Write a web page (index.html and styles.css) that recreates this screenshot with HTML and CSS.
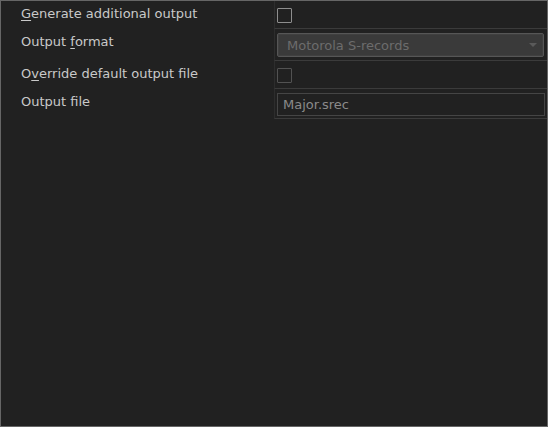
FILE: index.html
```html
<!DOCTYPE html>
<html>
<head>
<meta charset="utf-8">
<link rel="stylesheet" href="styles.css">
</head>
<body>
<div class="frame">
  <div class="row r1">
    <div class="label"><u>G</u>enerate additional output</div>
    <div class="value"><span class="check"></span></div>
  </div>
  <div class="row r2">
    <div class="label">Output <u>f</u>ormat</div>
    <div class="value">
      <div class="select"><span class="select-text">Motorola S-records</span><span class="arrow"></span></div>
    </div>
  </div>
  <div class="row r3">
    <div class="label">O<u>v</u>erride default output file</div>
    <div class="value"><span class="check disabled"></span></div>
  </div>
  <div class="row r4">
    <div class="label">Output file</div>
    <div class="value"><div class="input">Major.srec</div></div>
  </div>
</div>
</body>
</html>
```
FILE: styles.css
```css
html, body {
  margin: 0;
  padding: 0;
  background: #212121;
}
.frame {
  width: 548px;
  height: 427px;
  box-sizing: border-box;
  border: 1px solid #666666;
  background: #212121;
  font-family: "DejaVu Sans", Verdana, sans-serif;
  font-size: 13px;
  line-height: 15px;
}
.row {
  display: flex;
}
.r1 { height: 28px; }
.r2 { height: 32px; }
.r3 { height: 28px; }
.r4 { height: 30px; }
.label {
  width: 273px;
  box-sizing: border-box;
  padding: 5px 0 0 20px;
  color: #c9c9c9;
  white-space: nowrap;
}
.label u {
  text-underline-offset: 2px;
}
.value {
  flex: 1;
  border-left: 1px solid #2d2d2d;
  border-bottom: 1px solid #3b3b3b;
  display: flex;
  flex-direction: column;
  align-items: flex-start;
}
.check {
  display: block;
  width: 15px;
  height: 15px;
  box-sizing: border-box;
  margin: 7px 0 0 2px;
  border: 1px solid #8e8e8e;
  border-radius: 1px;
}
.check.disabled {
  border-color: #525252;
}
.select {
  position: relative;
  box-sizing: border-box;
  width: 267px;
  height: 24px;
  margin: 4px 0 0 2px;
  border: 1px solid #565656;
  border-radius: 2px;
  background: #3a3a3a;
  box-shadow: inset 0 0 0 1px #404040;
  color: #6c6c6c;
  padding: 4px 0 0 9px;
  white-space: nowrap;
}
.arrow {
  position: absolute;
  right: 6px;
  top: 9px;
  width: 0;
  height: 0;
  border-left: 4px solid transparent;
  border-right: 4px solid transparent;
  border-top: 4px solid #5a5a5a;
}
.input {
  box-sizing: border-box;
  width: 268px;
  height: 23px;
  margin: 4px 0 0 2px;
  border: 1px solid #454545;
  color: #8a8a8a;
  padding: 3px 0 0 5px;
  white-space: nowrap;
}
```
